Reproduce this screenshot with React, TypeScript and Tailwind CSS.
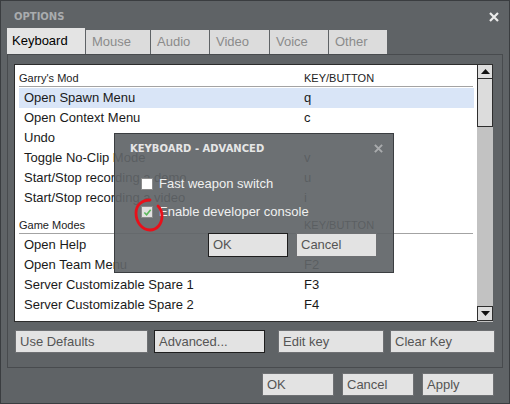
import React from "react";

type Row = { name: string; key?: string; selected?: boolean };

const garrysMod: Row[] = [
  { name: "Open Spawn Menu", key: "q", selected: true },
  { name: "Open Context Menu", key: "c" },
  { name: "Undo" },
  { name: "Toggle No-Clip Mode", key: "v" },
  { name: "Start/Stop recording a demo", key: "u" },
  { name: "Start/Stop recording a video", key: "i" },
];

const gameModes: Row[] = [
  { name: "Open Help", key: "F1" },
  { name: "Open Team Menu", key: "F2" },
  { name: "Server Customizable Spare 1", key: "F3" },
  { name: "Server Customizable Spare 2", key: "F4" },
];

const tabs = [
  { label: "Keyboard", w: "w-[78px]", active: true },
  { label: "Mouse", w: "w-[64px]" },
  { label: "Audio", w: "w-[58px]" },
  { label: "Video", w: "w-[59px]" },
  { label: "Voice", w: "w-[58px]" },
  { label: "Other", w: "w-[58px]" },
];

function CloseIcon({ className }: { className?: string }) {
  return (
    <svg viewBox="0 0 10 10" className={className}>
      <path d="M1 1 L9 9 M9 1 L1 9" stroke="currentColor" strokeWidth="2.2" />
    </svg>
  );
}

function Btn({
  label,
  w,
  focused,
}: {
  label: string;
  w: string;
  focused?: boolean;
}) {
  return (
    <div
      className={`${w} h-[23px] flex items-center pl-[4px] bg-[#e3e3e3] text-[13px] text-[#555] border ${
        focused ? "border-[#1e1e1e]" : "border-[#6e7073]"
      }`}
    >
      {label}
    </div>
  );
}

function Header({ title, tall }: { title: string; tall?: boolean }) {
  return (
    <>
      <div
        className={`${tall ? "h-[25px]" : "h-[21px]"} flex items-end pb-[1px] text-[11px] leading-[13px] text-[#222]`}
      >
        <span className="w-[285px]">{title}</span>
        <span>KEY/BUTTON</span>
      </div>
      <div className="h-[1px] bg-[#a3a3a3] mr-[1px]" />
      <div className="h-[1px]" />
    </>
  );
}

function ListRow({ row }: { row: Row }) {
  return (
    <div
      className={`h-[20px] flex items-center text-[13px] text-[#1a1a1a] ${
        row.selected ? "bg-[#d9e5f7]" : ""
      }`}
    >
      <span className="w-[285px] pl-[5px] whitespace-nowrap">{row.name}</span>
      <span>{row.key}</span>
    </div>
  );
}

function Arrow({ up }: { up?: boolean }) {
  return (
    <svg viewBox="0 0 9 5" className="w-[9px] h-[5px]">
      <path d={up ? "M0 5 L4.5 0 L9 5 Z" : "M0 0 L9 0 L4.5 5 Z"} fill="#111" />
    </svg>
  );
}

function Checkbox({ checked }: { checked?: boolean }) {
  return (
    <div
      className={`w-[12px] h-[12px] border border-[#8a8a8a] flex items-center justify-center ${
        checked ? "bg-[#e2e2e2]" : "bg-white"
      }`}
    >
      {checked ? (
        <svg viewBox="0 0 10 10" className="w-[9px] h-[9px]">
          <path d="M1.5 5 L4 7.5 L8.5 2" stroke="#5cb85c" strokeWidth="1.8" fill="none" />
        </svg>
      ) : null}
    </div>
  );
}

export default function App() {
  return (
    <div className="relative w-[510px] h-[404px] overflow-hidden bg-[#5f6366] border border-[#3a3d40] font-['Liberation_Sans',Arial,sans-serif]">
      {/* title bar */}
      <div className="h-[28px] flex items-center justify-between pl-[13px] pr-[10px]">
        <span className="font-['DejaVu_Sans',sans-serif] font-bold text-[10px] text-[#a9acae] pt-[3px]">
          OPTIONS
        </span>
        <CloseIcon className="w-[10px] h-[10px] text-[#ececec] mt-[4px]" />
      </div>

      {/* tabs */}
      <div className="h-[25px] flex items-end pl-[6px]">
        {tabs.map((t) =>
          t.active ? (
            <div
              key={t.label}
              className={`${t.w} h-[26px] flex items-center pl-[5px] bg-[#e4e4e4] text-[13px] text-black`}
            >
              {t.label}
            </div>
          ) : (
            <div
              key={t.label}
              className={`${t.w} ml-[1px] h-[24px] flex items-center pl-[6px] bg-[#dcdcdc] text-[13px] text-[#8b8b8b]`}
            >
              {t.label}
            </div>
          ),
        )}
      </div>

      {/* panel */}
      <div className="mx-[6px] h-[314px] border border-[#484b4e] pt-[9px] pl-[6px]">
        <div className="w-[479px] h-[258px] bg-white border border-[#2c2c2c] flex">
          <div className="flex-1 pl-[4px] pr-[3px]">
            <Header title="Garry's Mod" />
            {garrysMod.map((r) => (
              <ListRow key={r.name} row={r} />
            ))}
            <Header title="Game Modes" tall />
            {gameModes.map((r) => (
              <ListRow key={r.name} row={r} />
            ))}
          </div>
          <div className="w-[16px] -mt-[1px] -mr-[1px] -mb-[1px] bg-[#c2c2c2] flex flex-col">
            <div className="h-[15px] bg-[#dedede] border border-[#2e2e2e] flex items-center justify-center">
              <Arrow up />
            </div>
            <div className="h-[48px] bg-[#dcdcdc] border border-[#2e2e2e] border-t-0" />
            <div className="flex-1" />
            <div className="h-[15px] mb-[1px] bg-[#dedede] border border-[#2e2e2e] flex items-center justify-center">
              <Arrow />
            </div>
          </div>
        </div>

        <div className="mt-[8px] flex">
          <Btn label="Use Defaults" w="w-[133px] ml-[1px]" />
          <Btn label="Advanced..." w="w-[111px] ml-[6px]" focused />
          <Btn label="Edit key" w="w-[106px] ml-[13px]" />
          <Btn label="Clear Key" w="w-[105px] ml-[6px]" />
        </div>
      </div>

      {/* bottom buttons */}
      <div className="mt-[5px] flex justify-end pr-[15px] gap-[8px]">
        <Btn label="OK" w="w-[72px]" />
        <Btn label="Cancel" w="w-[72px]" />
        <Btn label="Apply" w="w-[72px]" />
      </div>

      {/* advanced dialog */}
      <div className="absolute left-[113px] top-[132px] w-[280px] h-[140px] bg-[rgba(96,100,103,0.92)] border border-[#3b3e41]">
        <div className="mt-[7px] h-[14px] flex items-center justify-between pl-[15px] pr-[10px]">
          <span className="font-['DejaVu_Sans',sans-serif] font-bold text-[10px] text-[#e6e6e6]">
            KEYBOARD - ADVANCED
          </span>
          <CloseIcon className="w-[9px] h-[9px] text-[#a9abad]" />
        </div>
        <div className="mt-[23px] pl-[26px] h-[12px] flex items-center gap-[6px]">
          <Checkbox />
          <span className="text-[13px] text-[#f0f0f0] leading-[12px]">Fast weapon switch</span>
        </div>
        <div className="mt-[16px] pl-[26px] h-[12px] flex items-center gap-[6px]">
          <Checkbox checked />
          <span className="text-[13px] text-[#f0f0f0] leading-[12px]">Enable developer console</span>
        </div>
        <div className="mt-[15px] flex justify-end pr-[16px] gap-[8px]">
          <Btn label="OK" w="w-[80px] h-[24px]" focused />
          <Btn label="Cancel" w="w-[81px] h-[24px]" />
        </div>
      </div>

      {/* hand-drawn red mark */}
      <svg
        className="absolute left-0 top-0 w-[510px] h-[404px] pointer-events-none"
        viewBox="0 0 510 404"
      >
        <path
          d="M149 199 C141 199 135 204 135 212 C135 221 141 229 149 229 C156 229 161 223 161 215 C161 210 159 207 157 205"
          stroke="#e8101a"
          strokeWidth="2.8"
          fill="none"
          strokeLinecap="round"
        />
      </svg>
    </div>
  );
}
